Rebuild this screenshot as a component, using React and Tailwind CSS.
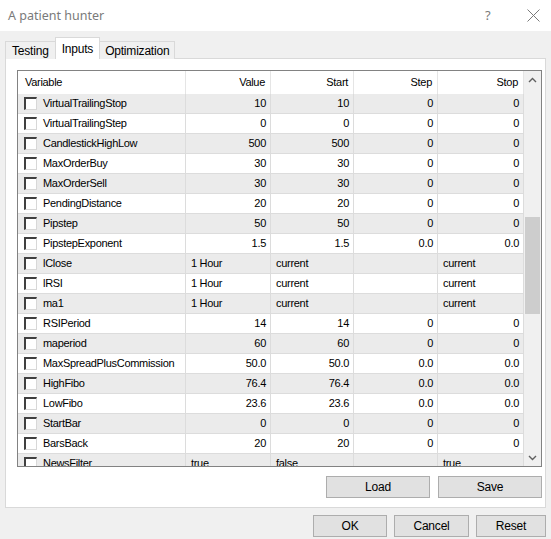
import React from 'react';

const rows = [
  ['VirtualTrailingStop', '10', '10', '0', '0'],
  ['VirtualTrailingStep', '0', '0', '0', '0'],
  ['CandlestickHighLow', '500', '500', '0', '0'],
  ['MaxOrderBuy', '30', '30', '0', '0'],
  ['MaxOrderSell', '30', '30', '0', '0'],
  ['PendingDistance', '20', '20', '0', '0'],
  ['Pipstep', '50', '50', '0', '0'],
  ['PipstepExponent', '1.5', '1.5', '0.0', '0.0'],
  ['lClose', '1 Hour', 'current', '', 'current', true],
  ['lRSI', '1 Hour', 'current', '', 'current', true],
  ['ma1', '1 Hour', 'current', '', 'current', true],
  ['RSIPeriod', '14', '14', '0', '0'],
  ['maperiod', '60', '60', '0', '0'],
  ['MaxSpreadPlusCommission', '50.0', '50.0', '0.0', '0.0'],
  ['HighFibo', '76.4', '76.4', '0.0', '0.0'],
  ['LowFibo', '23.6', '23.6', '0.0', '0.0'],
  ['StartBar', '0', '0', '0', '0'],
  ['BarsBack', '20', '20', '0', '0'],
  ['NewsFilter', 'true', 'false', '', 'true', true],
];

const cols = 'grid grid-cols-[168px_85px_83px_84px_86px]';

// celda con alineación según el tipo de valor
const Cell = ({ children, left }) => (
  <div className={`border-r border-[#dcdcdc] flex items-center ${left ? 'justify-start pl-[5px]' : 'justify-end pr-[4px]'}`}>
    {children}
  </div>
);

const Checkbox = () => (
  <span className="w-[13px] h-[13px] bg-white border-t-2 border-l-2 border-t-[#404040] border-l-[#404040] border-r border-b border-r-[#d8d8d8] border-b-[#d8d8d8] shrink-0" />
);

const Button = ({ label, w }) => (
  <button className={`${w} h-[22px] bg-[#e1e1e1] border border-[#adadad] text-[12px] tracking-[-0.2px] text-black flex items-center justify-center`}>
    {label}
  </button>
);

export default function App() {
  return (
    <div className="w-[551px] h-[539px] bg-[#f0f0f0] overflow-hidden relative" style={{ fontFamily: '"Liberation Sans", Arial, sans-serif' }}>
      {/* barra de título */}
      <div className="h-[31px] bg-white flex items-center pl-[8px] pt-[1px] relative">
        <span className="text-[12.5px] text-[#7a7a7a]" style={{ fontFamily: '"Noto Sans", sans-serif' }}>A patient hunter</span>
        <span className="absolute left-[485px] top-[6px] text-[13px] text-[#7a7a7a]" style={{ fontFamily: '"Noto Sans", sans-serif' }}>?</span>
        <svg className="absolute left-[527px] top-[9px]" width="13" height="13" viewBox="0 0 13 13">
          <path d="M0.5 0.5 L12.5 12.5 M12.5 0.5 L0.5 12.5" stroke="#7a7a7a" strokeWidth="1" fill="none" />
        </svg>
      </div>

      {/* pestañas */}
      <div className="flex items-end h-[27px] pl-[5px] text-[12px] tracking-[-0.2px] text-black">
        <div className="h-[18px] px-[6px] border border-b-0 border-[#d9d9d9] bg-[#f0f0f0] flex items-center mb-[-1px]">Testing</div>
        <div className="h-[22px] px-[6px] border border-b-0 border-[#d9d9d9] bg-white flex items-start pt-[2px] relative z-10 mb-[-1px] -mx-px">Inputs</div>
        <div className="h-[18px] px-[5px] border border-b-0 border-[#d9d9d9] bg-[#f0f0f0] flex items-center mb-[-1px]">Optimization</div>
      </div>

      {/* panel */}
      <div className="ml-[5px] w-[541px] h-[450px] bg-white border border-[#d9d9d9] pt-[11px] pl-[11px]">
        <div className="w-[525px] h-[397px] border border-[#828282] flex overflow-hidden text-[11px] tracking-[-0.3px] text-black">
          <div className="w-[506px] overflow-hidden">
            <div className={`${cols} h-[23px] bg-white`}>
              <div className="border-r border-[#e5e5e5] flex items-center pl-[7px]">Variable</div>
              {['Value', 'Start', 'Step', 'Stop'].map(h => (
                <div key={h} className="border-r border-[#e5e5e5] flex items-center justify-end pr-[5px]">{h}</div>
              ))}
            </div>
            {rows.map((r, i) => (
              <div key={r[0]} className={`${cols} h-[20px] border-b border-[#dcdcdc] ${i % 2 === 0 ? 'bg-[#ebebeb]' : 'bg-white'}`}>
                <div className="border-r border-[#dcdcdc] flex items-center pl-[6px] gap-[6px]">
                  <Checkbox />
                  <span>{r[0]}</span>
                </div>
                <Cell left={r[5]}>{r[1]}</Cell>
                <Cell left={r[5]}>{r[2]}</Cell>
                <Cell left={r[5]}>{r[3]}</Cell>
                <Cell left={r[5]}>{r[4]}</Cell>
              </div>
            ))}
          </div>
          {/* barra de desplazamiento */}
          <div className="w-[17px] bg-[#f0f0f0] flex flex-col items-center">
            <div className="h-[17px] flex items-center justify-center">
              <svg width="9" height="6" viewBox="0 0 9 6"><path d="M1 5 L4.5 1.5 L8 5" stroke="#606060" strokeWidth="1.4" fill="none" /></svg>
            </div>
            <div className="mt-[129px] w-[15px] h-[97px] bg-[#cdcdcd]" />
            <div className="flex-1" />
            <div className="h-[17px] flex items-center justify-center">
              <svg width="9" height="6" viewBox="0 0 9 6"><path d="M1 1 L4.5 4.5 L8 1" stroke="#606060" strokeWidth="1.4" fill="none" /></svg>
            </div>
          </div>
        </div>
        <div className="flex justify-end gap-[8px] mt-[9px] w-[525px]">
          <Button label="Load" w="w-[104px]" />
          <Button label="Save" w="w-[104px]" />
        </div>
      </div>

      {/* botones inferiores */}
      <div className="flex justify-end gap-[7px] pr-[5px] mt-[7px]">
        <Button label="OK" w="w-[74px]" />
        <Button label="Cancel" w="w-[75px]" />
        <Button label="Reset" w="w-[70px]" />
      </div>
    </div>
  );
}
